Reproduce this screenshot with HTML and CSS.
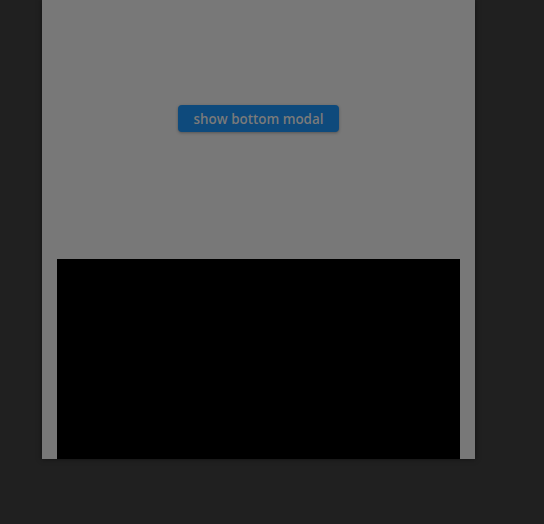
FILE: index.html
```html
<!DOCTYPE html>
<html>
<head>
<meta charset="utf-8">
<link rel="stylesheet" href="styles.css">
</head>
<body>
<div class="frame">
  <div class="top">
    <button class="btn">show bottom modal</button>
  </div>
  <div class="sheet"></div>
</div>
</body>
</html>
```
FILE: styles.css
```css
html, body {
  margin: 0;
  padding: 0;
  background: #202020;
  width: 544px;
  height: 524px;
  overflow: hidden;
}
.frame {
  margin-left: 42px;
  width: 433px;
  height: 459px;
  background: #787878;
  box-shadow: 0 0 6px rgba(0,0,0,0.45);
  display: flex;
  flex-direction: column;
}
.top {
  height: 259px;
  display: flex;
  justify-content: center;
  align-items: flex-start;
  padding-top: 105px;
  box-sizing: border-box;
}
.btn {
  width: 161px;
  height: 27px;
  border: none;
  border-radius: 4px;
  background: #0e4a7c;
  color: #7a7a7a;
  font-family: "Open Sans", "DejaVu Sans", sans-serif;
  font-weight: 600;
  font-size: 13.4px;
  padding: 2px 0 0 0;
  box-shadow: 0 1px 3px rgba(0,0,0,0.3);
  line-height: 25px;
}
.sheet {
  margin: 0 15px;
  flex: 1;
  background: #000;
}
```
